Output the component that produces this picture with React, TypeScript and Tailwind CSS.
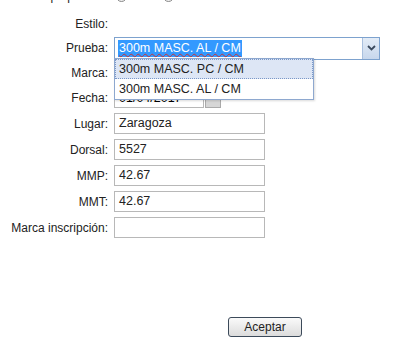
import React from 'react'

const rows = [
  { label: 'Lugar:', value: 'Zaragoza' },
  { label: 'Dorsal:', value: '5527' },
  { label: 'MMP:', value: '42.67' },
  { label: 'MMT:', value: '42.67' },
  { label: 'Marca inscripción:', value: '' },
]

function Label({ children }: { children: React.ReactNode }) {
  return <div className="w-[108px] shrink-0 text-right text-[12px] text-[#222]">{children}</div>
}

export default function App() {
  return (
    <div className="w-[399px] h-[345px] bg-white overflow-hidden" style={{ fontFamily: '"Liberation Sans", Arial, sans-serif' }}>
      {/* top row, cut off */}
      <div className="flex items-center h-[16px] -mt-[12px] text-[12px] text-[#222]">
        <div className="w-[108px] text-right">Tipo prueba:</div>
        <div className="flex items-center gap-1 ml-[8px]">
          <span className="w-[11px] h-[11px] rounded-full border border-[#888] bg-[#eee]" />
          <span>FALL</span>
          <span className="w-[11px] h-[11px] rounded-full border border-[#888] bg-[#eee]" />
          <span>OUTDOOR</span>
        </div>
      </div>

      <div className="flex items-center h-[24px] mt-[8px]">
        <Label>Estilo:</Label>
      </div>

      {/* Prueba */}
      <div className="relative flex items-center h-[24px]">
        <Label>Prueba:</Label>
        <div className="ml-[6px] flex h-[23px] w-[266px] border border-[#7da2ce] bg-white">
          <div className="flex-1 flex items-center pl-[3px]">
            <span className="bg-[#3399ff] text-white text-[12.5px] leading-[17px] px-[1px] underline decoration-wavy decoration-[#c33] decoration-1">300m MASC. AL / CM</span>
          </div>
          <div className="w-[17px] flex items-center justify-center bg-gradient-to-b from-[#e3ecf7] to-[#c7d7ec] border-l border-[#a9c0de]">
            <svg width="9" height="6" viewBox="0 0 9 6">
              <path d="M1 1 L4.5 4.5 L8 1" stroke="#3b4a5e" strokeWidth="1.8" fill="none" />
            </svg>
          </div>
        </div>

        {/* open list */}
        <div className="absolute left-[114px] top-[22px] z-10 w-[200px] border border-[#8ea8cf] bg-white shadow-[1px_1px_2px_rgba(0,0,0,0.15)] text-[12.5px] text-[#222]">
          <div className="h-[20px] flex items-center pl-[3px] bg-[#dde6f5] border border-dotted border-[#7b98c8]">300m MASC. PC / CM</div>
          <div className="h-[20px] flex items-center pl-[4px]">300m MASC. AL / CM</div>
        </div>
      </div>

      <div className="flex items-center h-[25px]">
        <Label>Marca:</Label>
      </div>

      {/* Fecha */}
      <div className="flex items-center h-[26px]">
        <Label>Fecha:</Label>
        <div className="ml-[6px] flex items-center">
          <div className="w-[90px] h-[20px] border border-[#b8b8b8] text-[12.5px] pl-[4px] leading-[18px]">01/04/2017</div>
          <div className="ml-[1px] w-[16px] h-[19px] bg-[#d6d6d6] border border-[#aaa]" />
        </div>
      </div>

      <div className="flex flex-col gap-[5px] mt-[2px]">
        {rows.map(r => (
          <div key={r.label} className="flex items-center h-[21px]">
            <Label>{r.label}</Label>
            <div className="ml-[6px] w-[151px] h-[21px] border border-[#b8b8b8] text-[12.5px] text-[#222] pl-[4px] leading-[19px]">{r.value}</div>
          </div>
        ))}
      </div>

      <div className="flex mt-[79px] pl-[228px]">
        <button className="w-[74px] h-[20px] rounded-[3px] border border-[#3c4a5a] bg-gradient-to-b from-[#fafafa] to-[#dcdcdc] text-[12px] text-[#222] leading-none">Aceptar</button>
      </div>
    </div>
  )
}
